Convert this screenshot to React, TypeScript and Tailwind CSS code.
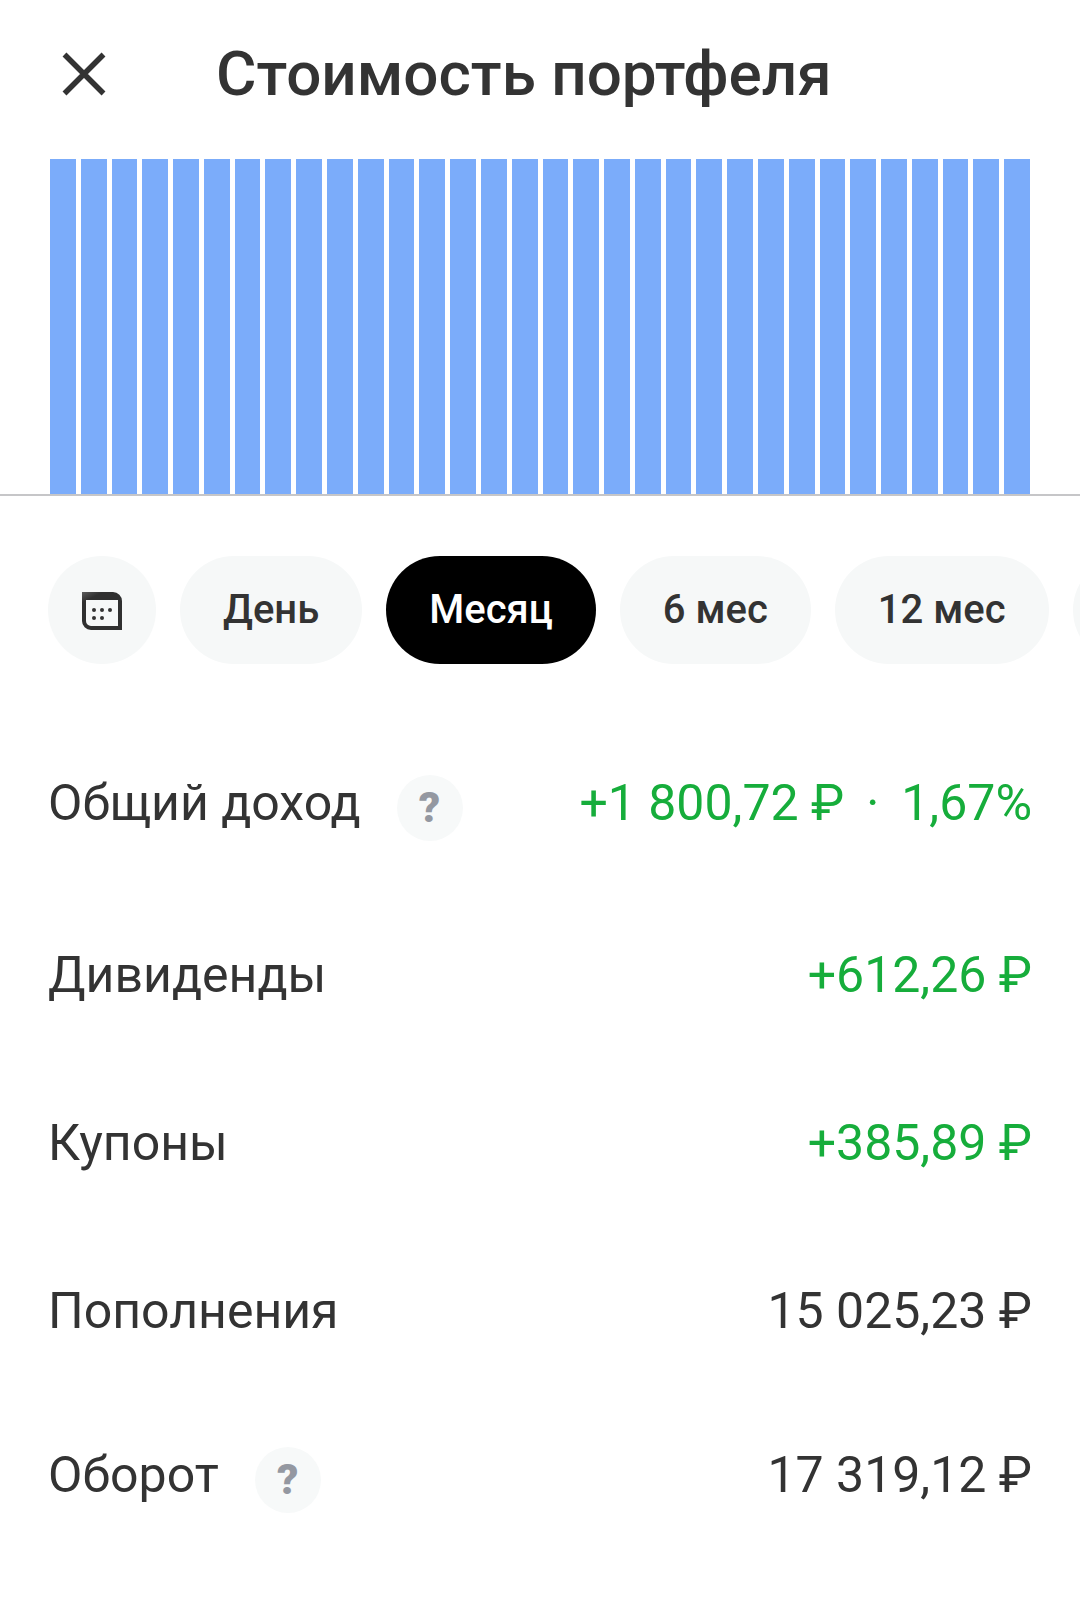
import { useState } from 'react';

type Stat = {
  label: string;
  value: string;
  percent?: string;
  positive?: boolean;
  hint?: boolean;
};

const periods = ['День', 'Месяц', '6 мес', '12 мес'];

const stats: Stat[] = [
  { label: 'Общий доход', value: '+1 800,72 ₽', percent: '1,67%', positive: true, hint: true },
  { label: 'Дивиденды', value: '+612,26 ₽', positive: true },
  { label: 'Купоны', value: '+385,89 ₽', positive: true },
  { label: 'Пополнения', value: '15 025,23 ₽' },
  { label: 'Оборот', value: '17 319,12 ₽', hint: true },
];

// Share of the chart height for each day of the period
const bars: number[] = Array(32).fill(100);

function CloseIcon() {
  return (
    <svg width="44" height="44" viewBox="0 0 44 44" fill="none" aria-hidden="true">
      <path d="M2.5 2.5L41.5 41.5M41.5 2.5L2.5 41.5" stroke="#333333" strokeWidth="5.5" />
    </svg>
  );
}

function CalendarIcon() {
  return (
    <svg width="40" height="40" viewBox="0 -2 40 40" aria-hidden="true">
      <defs>
        <linearGradient id="calendar-top" x1="0" y1="0" x2="0.12" y2="0.22">
          <stop offset="0" stopColor="#5c5c5c" />
          <stop offset="1" stopColor="#303030" />
        </linearGradient>
      </defs>
      <path
        fillRule="evenodd"
        fill="url(#calendar-top)"
        d="M0 0H31a9 9 0 0 1 9 9V38H9a9 9 0 0 1-9-9ZM4 8V29a5 5 0 0 0 5 5H36V8Z"
      />
      <g fill="#333333">
        <circle cx="12" cy="18" r="2" />
        <circle cx="20" cy="18" r="2" />
        <circle cx="28" cy="18" r="2" />
        <circle cx="12" cy="26" r="2" />
        <circle cx="20" cy="26" r="2" />
      </g>
    </svg>
  );
}

export default function App() {
  const [period, setPeriod] = useState('Месяц');

  return (
    <main className="min-h-screen overflow-x-hidden bg-white font-['Roboto',sans-serif] text-[#333333]">
      <header className="flex items-center gap-24 pt-9 pb-[47px] pl-12">
        <button
          type="button"
          aria-label="Закрыть"
          className="flex size-[72px] shrink-0 items-center justify-center"
        >
          <CloseIcon />
        </button>
        <h1 className="text-[62px] leading-[76px] font-medium whitespace-nowrap">
          Стоимость портфеля
        </h1>
      </header>

      <div className="flex h-[337px] items-end gap-[5px] border-b-2 border-[#c6c6c8] px-[50px]">
        {bars.map((height, i) => (
          <div key={i} className="flex-1 bg-[#7bacfa]" style={{ height: `${height}%` }} />
        ))}
      </div>

      <div className="flex gap-6 overflow-hidden pt-[60px] pl-12">
        <button
          type="button"
          aria-label="Выбрать даты"
          className="flex size-[108px] shrink-0 items-center justify-center rounded-full bg-[#f6f8f8]"
        >
          <CalendarIcon />
        </button>
        {periods.map((item) => (
          <button
            key={item}
            type="button"
            aria-pressed={item === period}
            onClick={() => setPeriod(item)}
            className={`h-[108px] shrink-0 rounded-full px-[43px] text-[40px] font-medium whitespace-nowrap ${
              item === period ? 'bg-black text-white' : 'bg-[#f6f8f8]'
            }`}
          >
            {item}
          </button>
        ))}
        <button
          type="button"
          aria-label="Другие периоды"
          className="h-[108px] w-[180px] shrink-0 rounded-full bg-[#f6f8f8]"
        />
      </div>

      <dl className="flex flex-col gap-[102px] px-12 pt-[111px] pb-20 text-[50px] leading-[56px]">
        {stats.map((stat) => (
          <div
            key={stat.label}
            className="flex min-h-[66px] items-start justify-between first:mb-1 last:-mt-1"
          >
            <dt className="flex items-start gap-9 whitespace-nowrap">
              {stat.label}
              {stat.hint && (
                <button
                  type="button"
                  aria-label={`Подробнее: ${stat.label}`}
                  className="flex size-[66px] items-center justify-center rounded-full bg-[#f7f9f9] text-[42px] font-black text-[#9498a1]"
                >
                  ?
                </button>
              )}
            </dt>
            <dd className={`whitespace-nowrap ${stat.positive ? 'text-[#16ad3b]' : ''}`}>
              {stat.value}
              {stat.percent && (
                <>
                  <span className="mx-[22px]">·</span>
                  {stat.percent}
                </>
              )}
            </dd>
          </div>
        ))}
      </dl>
    </main>
  );
}
